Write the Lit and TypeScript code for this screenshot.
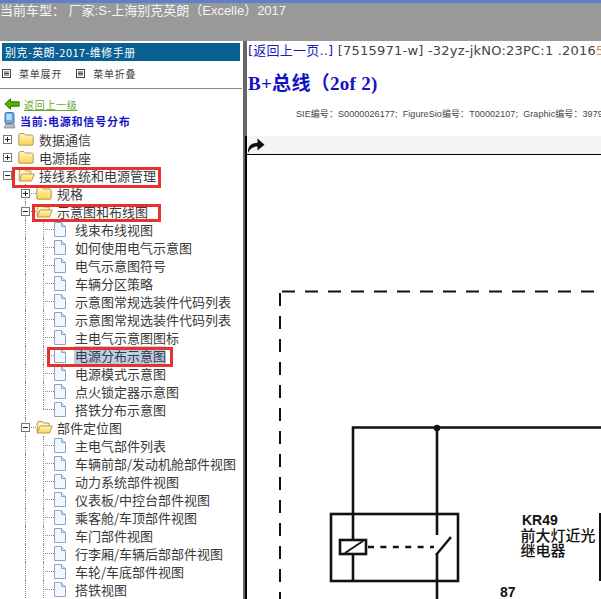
import { LitElement, html, css, svg } from 'lit';
import { customElement } from 'lit/decorators.js';
import { classMap } from 'lit/directives/class-map.js';

type Node = {
  label: string;
  level: number;
  kind: 'closed' | 'open' | 'page';
  guides: boolean[];
  last?: boolean;
  mark?: boolean;
};

const page = (label: string, last = false, mark = false): Node => ({
  label,
  level: 2,
  kind: 'page',
  guides: [false, true],
  last,
  mark,
});

const tree: Node[] = [
  { label: '数据通信', level: 0, kind: 'closed', guides: [] },
  { label: '电源插座', level: 0, kind: 'closed', guides: [] },
  { label: '接线系统和电源管理', level: 0, kind: 'open', guides: [] },
  { label: '规格', level: 1, kind: 'closed', guides: [false] },
  { label: '示意图和布线图', level: 1, kind: 'open', guides: [false] },
  page('线束布线视图'),
  page('如何使用电气示意图'),
  page('电气示意图符号'),
  page('车辆分区策略'),
  page('示意图常规选装件代码列表'),
  page('示意图常规选装件代码列表'),
  page('主电气示意图图标'),
  page('电源分布示意图', false, true),
  page('电源模式示意图'),
  page('点火锁定器示意图'),
  page('搭铁分布示意图', true),
  { label: '部件定位图', level: 1, kind: 'open', guides: [false] },
  page('主电气部件列表'),
  page('车辆前部/发动机舱部件视图'),
  page('动力系统部件视图'),
  page('仪表板/中控台部件视图'),
  page('乘客舱/车顶部件视图'),
  page('车门部件视图'),
  page('行李厢/车辆后部部件视图'),
  page('车轮/车底部件视图'),
  page('搭铁视图'),
];

const menuIcon = html`<svg width="9" height="9" viewBox="0 0 9 9">
  <rect x="0.5" y="0.5" width="8" height="8" fill="#fff" stroke="#444" />
  <path d="M2 3h5M2 4.5h5M2 6h5" stroke="#444" />
</svg>`;

const folderDefs = html`<svg width="0" height="0" style="position:absolute">
  <defs>
    <linearGradient id="fy" x1="0" y1="0" x2="0" y2="1">
      <stop offset="0" stop-color="#fff6c4" />
      <stop offset="1" stop-color="#fbd34e" />
    </linearGradient>
  </defs>
</svg>`;

const folderClosed = html`<svg width="16" height="14" viewBox="0 0 16 14">
  <path d="M0.8 3.2 Q0.8 1.5 2.5 1.5 H6 L7.5 3 H13.5 Q15.2 3 15.2 4.5 V12 Q15.2 13.2 14 13.2 H2 Q0.8 13.2 0.8 12 Z" fill="url(#fy)" stroke="#b49a4c" />
</svg>`;

const folderOpen = html`<svg width="17" height="14" viewBox="0 0 17 14">
  <path d="M1.2 12.5 V3.2 Q1.2 1.5 3 1.5 H6.5 L8 3 H13 V6" fill="#fff3b8" stroke="#b49a4c" />
  <path d="M1.2 13 L4 6 H16.2 L13.5 13 Z" fill="url(#fy)" stroke="#b49a4c" />
</svg>`;

const pageIcon = html`<svg class="pg" width="13" height="15" viewBox="0 0 13 15">
  <path d="M1.5 0.5 H8.5 L12.5 4.5 V14.5 H1.5 Z" fill="#f2f7fd" stroke="#8aa4c8" />
  <path d="M8.5 0.5 V4.5 H12.5" fill="#d3e1f3" stroke="#8aa4c8" />
</svg>`;

const backIcon = html`<svg width="16" height="12" viewBox="0 0 16 12">
  <path d="M0.8 6 L6.5 0.8 V3.8 H15.2 V8.2 H6.5 V11.2 Z" fill="#58b000" stroke="#2f7a00" />
</svg>`;

const pcIcon = html`<svg width="13" height="17" viewBox="0 0 13 17">
  <rect x="2" y="0.5" width="9" height="11" rx="1.5" fill="#6ea8e8" stroke="#3f6fb0" />
  <rect x="3.5" y="2" width="5" height="6" fill="#bcdcfb" />
  <path d="M1 16 L3 12 H11 L12 16 Z" fill="#b8bcc4" stroke="#7c8088" stroke-width="0.7" />
</svg>`;

const turnIcon = html`<svg width="18" height="17" viewBox="0 0 18 17">
  <path d="M1 16 C0.5 9 4 6 10.5 5.8 V1.5 L17.5 7.8 L10.5 13.5 V9.6 C6 9.6 3 11.5 1 16 Z" fill="#111" />
</svg>`;

const diagram = svg`
  <g fill="none" stroke="#111">
    <path d="M282 291.5 H601" stroke-width="2" stroke-dasharray="13 10" />
    <path d="M280 293 V599" stroke-width="2" stroke-dasharray="13 10" />
    <path d="M353 581 V427.5 H601" stroke-width="2.6" />
    <path d="M437 428 V535 M437 554 V599" stroke-width="2.6" />
    <rect x="331" y="514" width="127" height="67" stroke-width="2.6" />
    <rect x="340" y="540" width="26" height="14" stroke-width="2.6" fill="#fff" />
    <path d="M345 553 L363 541" stroke-width="1.8" />
    <path d="M368 547 H434" stroke-width="2.4" stroke-dasharray="6 6.4" />
    <path d="M436 555 L451 537" stroke-width="2.4" />
    <path d="M600 513 V581" stroke-width="2" />
  </g>
  <circle cx="437" cy="428" r="3.2" fill="#111" />
  <text x="522" y="525" class="dg b">KR49</text>
  <text x="520.5" y="541" class="dg cn">前大灯近光</text>
  <text x="520.5" y="556" class="dg cn">继电器</text>
  <text x="500" y="597" class="dg b">87</text>
`;

@customElement('app-root')
export class AppRoot extends LitElement {
  static styles = css`
    :host {
      display: block;
      width: 601px;
      height: 599px;
      overflow: hidden;
      position: relative;
      background: #fff;
      font-family: 'Noto Sans CJK SC', 'Liberation Sans', sans-serif;
      color: #333;
    }

    .top {
      height: 41px;
      box-sizing: border-box;
      background: #999;
      border-top: 3px solid #5f80c4;
      color: #f4f4f4;
      font-size: 13px;
      line-height: 15px;
      white-space: nowrap;
      font-family: 'Liberation Sans', 'Noto Sans CJK SC', sans-serif;
    }

    .main {
      display: flex;
      height: 558px;
    }

    .side {
      width: 243px;
      flex: none;
      overflow: hidden;
      padding-top: 2px;
      box-sizing: border-box;
    }

    .splitter {
      width: 4px;
      flex: none;
      background: #666;
    }

    .title {
      margin-left: 2px;
      width: 238px;
      height: 18px;
      padding-left: 3px;
      box-sizing: border-box;
      background: #0a5f93;
      color: #fff;
      font-size: 11px;
      letter-spacing: 0.45px;
      line-height: 18px;
      white-space: nowrap;
    }

    .menu {
      display: flex;
      height: 28px;
      box-sizing: border-box;
      padding: 0 0 3px 2px;
      align-items: center;
      border-bottom: 1px solid #888;
      font-size: 10px;
      letter-spacing: 0.8px;
      color: #444;
      margin-right: 1px;
    }

    .menu span {
      margin-left: 8px;
      margin-right: 14px;
    }

    .back {
      display: flex;
      align-items: center;
      gap: 4px;
      margin: 8px 0 0 4px;
      height: 14px;
      font-size: 10px;
      letter-spacing: 0.7px;
      color: #6aa535;
      text-decoration: underline;
    }

    .current {
      display: flex;
      align-items: center;
      gap: 4px;
      margin: 1px 0 0 3px;
      height: 17px;
      font-size: 11px;
      letter-spacing: 0.8px;
      font-weight: 700;
      color: #1515c8;
    }

    .tree {
      margin-top: 1px;
      font-size: 13px;
      color: #3a3a3a;
    }

    .row {
      display: flex;
      height: 18px;
      align-items: center;
      white-space: nowrap;
    }

    .cell {
      width: 18px;
      height: 18px;
      flex: none;
      position: relative;
      display: flex;
      align-items: center;
    }

    .guide::before,
    .joint::before {
      content: '';
      position: absolute;
      left: 7px;
      top: 0;
      bottom: 0;
      border-left: 1px dotted #888;
    }

    .joint.end::before {
      bottom: 9px;
    }

    .joint::after {
      content: '';
      position: absolute;
      left: 7px;
      right: 0;
      top: 9px;
      border-top: 1px dotted #888;
    }

    .box {
      position: relative;
      z-index: 1;
      margin-left: 3px;
      width: 9px;
      height: 9px;
      box-sizing: border-box;
      border: 1px solid #777;
      background: #fff;
    }

    .box::before {
      content: '';
      position: absolute;
      left: 1px;
      right: 1px;
      top: 3px;
      border-top: 1px solid #222;
    }

    .box.plus::after {
      content: '';
      position: absolute;
      top: 1px;
      bottom: 1px;
      left: 3px;
      border-left: 1px solid #222;
    }

    .pg {
      margin-left: -1px;
    }

    .label {
      margin-left: 2px;
      padding-left: 1px;
    }

    .mark {
      background: #bccde8;
    }

    /* red annotation boxes drawn over the tree */
    .hl {
      position: absolute;
      border: 3px solid #e8302c;
      box-sizing: border-box;
      pointer-events: none;
    }

    .hl.a { left: 12px; top: 167px; width: 149px; height: 21px; }
    .hl.b { left: 32px; top: 204px; width: 129px; height: 18px; }
    .hl.c { left: 47px; top: 347px; width: 126px; height: 20px; }

    .content {
      flex: 1;
      min-width: 0;
      overflow: hidden;
      white-space: nowrap;
    }

    .path {
      height: 15px;
      margin: 0 0 0 1px;
      padding-top: 2px;
      font-size: 13px;
      line-height: 15px;
      color: #444;
      letter-spacing: 0.22px;
      font-family: 'DejaVu Sans', 'Noto Sans CJK SC', sans-serif;
    }

    .path a {
      color: #1a1ab8;
    }

    .path b {
      font-weight: 400;
      color: #d98a3a;
    }

    h1 {
      margin: 15px 0 0 1px;
      height: 22px;
      font-size: 19px;
      line-height: 22px;
      letter-spacing: 0.3px;
      font-weight: 700;
      color: #1212c4;
      font-family: 'Liberation Serif', 'Noto Sans CJK SC', serif;
    }

    .meta {
      margin: 12px 0 0 49px;
      height: 14px;
      font-size: 9px;
      line-height: 14px;
      letter-spacing: 0.08px;
      color: #444;
      font-family: 'Liberation Sans', 'Noto Sans CJK SC', sans-serif;
    }

    .tools {
      margin-top: 15px;
      height: 19px;
      box-sizing: border-box;
      background: #f5f5f5;
      border-bottom: 1px solid #000;
      display: flex;
      align-items: center;
    }

    .canvas {
      position: absolute;
      left: 0;
      top: 0;
    }

    .edge {
      position: absolute;
      left: 245px;
      top: 136px;
      width: 2px;
      height: 463px;
      background: #000;
    }

    .dg {
      font-family: 'Liberation Sans', 'Noto Sans CJK SC', sans-serif;
      font-size: 14px;
      fill: #111;
    }

    .dg.b {
      font-weight: 700;
    }

    .dg.cn {
      font-size: 15px;
      font-weight: 500;
    }
  `;

  private renderNode(n: Node) {
    const toggle = n.kind === 'page' ? null : html`<i class=${classMap({ box: true, plus: n.kind === 'closed' })}></i>`;
    return html`<div class="row">
      ${n.guides.map((g) => html`<div class=${classMap({ cell: true, guide: g })}></div>`)}
      <div class=${classMap({ cell: true, joint: n.level > 0, end: !!n.last })}>${toggle}</div>
      <div class="cell">${n.kind === 'page' ? pageIcon : n.kind === 'open' ? folderOpen : folderClosed}</div>
      <span class=${classMap({ label: true, mark: !!n.mark })}>${n.label}</span>
    </div>`;
  }

  render() {
    return html`
      ${folderDefs}
      <div class="top">当前车型： 厂家:S-上海别克英朗（Excelle）2017</div>
      <div class="main">
        <div class="side">
          <div class="title">别克-英朗-2017-维修手册</div>
          <div class="menu">${menuIcon}<span>菜单展开</span>${menuIcon}<span>菜单折叠</span></div>
          <div class="back">${backIcon}<span>返回上一级</span></div>
          <div class="current">${pcIcon}<span>当前:电源和信号分布</span></div>
          <div class="tree">${tree.map((n) => this.renderNode(n))}</div>
        </div>
        <div class="splitter"></div>
        <div class="content">
          <div class="path"><a>[返回上一页..]</a> [7515971-w] -32yz-jkNO:23PC:1 .2016<b>5</b></div>
          <h1>B+总线（2of 2)</h1>
          <div class="meta">SIE编号：S0000026177;&nbsp; FigureSio编号：T00002107;&nbsp; Graphic编号：3979</div>
          <div class="tools">${turnIcon}</div>
        </div>
      </div>
      <svg class="canvas" width="601" height="599" viewBox="0 0 601 599">${diagram}</svg>
      <div class="edge"></div>
      <div class="hl a"></div>
      <div class="hl b"></div>
      <div class="hl c"></div>
    `;
  }
}

declare global {
  interface HTMLElementTagNameMap {
    'app-root': AppRoot;
  }
}
